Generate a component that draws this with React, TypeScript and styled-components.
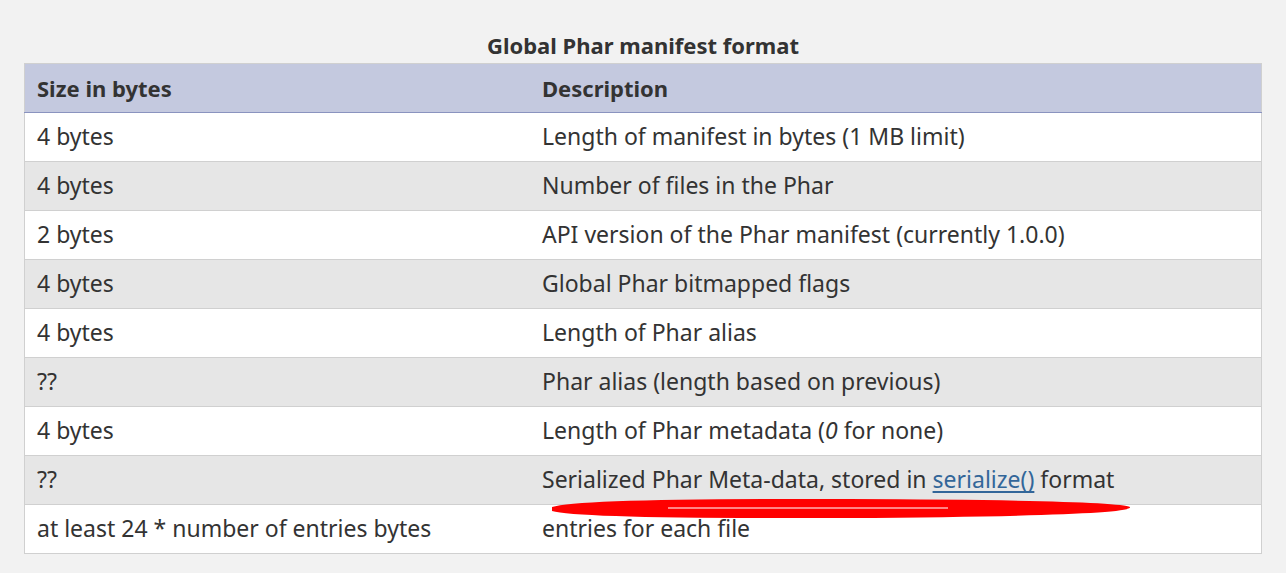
import React from "react";
import styled, { createGlobalStyle } from "styled-components";

const Global = createGlobalStyle`
  html, body { margin: 0; background: #f2f2f2; }
  body { font-family: "Noto Sans", "Open Sans", sans-serif; color: #333; }
`;

const Page = styled.div`
  padding: 28px 24px 0 24px;
  position: relative;
`;

const Table = styled.table`
  width: 1238px;
  border-collapse: collapse;
  border: 1px solid #d0d0d0;
  font-size: 23px;
  line-height: 1.2;
`;

const Caption = styled.caption`
  font-weight: 700;
  font-size: 22px;
  height: 35px;
  line-height: 35px;
  color: #333;
`;

const Th = styled.th<{ $w?: string }>`
  background: #c4c9df;
  text-align: left;
  font-weight: 700;
  font-size: 22px;
  height: 48px;
  padding: 0 12px;
  border-bottom: 1px solid #8a93bf;
  width: ${(p) => p.$w || "auto"};
`;

const Tr = styled.tr<{ $alt: boolean }>`
  background: ${(p) => (p.$alt ? "#e6e6e6" : "#ffffff")};
  border-top: 1px solid #d0d0d0;
`;

const Td = styled.td`
  height: 48px;
  padding: 0 12px;
  vertical-align: middle;
`;

const Link = styled.a`
  color: #336699;
  text-decoration: underline;
  text-underline-offset: 3px;
`;

const Scribble = styled.svg`
  position: absolute;
  left: 548px;
  top: 494px;
  pointer-events: none;
`;

const rows: [string, React.ReactNode][] = [
  ["4 bytes", "Length of manifest in bytes (1 MB limit)"],
  ["4 bytes", "Number of files in the Phar"],
  ["2 bytes", "API version of the Phar manifest (currently 1.0.0)"],
  ["4 bytes", "Global Phar bitmapped flags"],
  ["4 bytes", "Length of Phar alias"],
  ["??", "Phar alias (length based on previous)"],
  ["4 bytes", <>Length of Phar metadata (<em>0</em> for none)</>],
  ["??", <>Serialized Phar Meta-data, stored in <Link href="#">serialize()</Link> format</>],
  ["at least 24 * number of entries bytes", "entries for each file"],
];

export default function App() {
  return (
    <>
      <Global />
      <Page>
        <Table>
          <Caption>Global Phar manifest format</Caption>
          <thead>
            <tr>
              <Th $w="481px">Size in bytes</Th>
              <Th>Description</Th>
            </tr>
          </thead>
          <tbody>
            {rows.map(([a, b], i) => (
              <Tr key={i} $alt={i % 2 === 1}>
                <Td>{a}</Td>
                <Td>{b}</Td>
              </Tr>
            ))}
          </tbody>
        </Table>
        <Scribble width="590" height="28" viewBox="0 0 590 28">
          <path d="M4 13 Q30 4 300 5 Q570 6 582 13 Q588 22 300 24 Q30 25 4 17 Z" fill="#ff0000" />
          <path d="M120 14 L400 14" stroke="#ffb0b0" strokeWidth="1.5" />
        </Scribble>
      </Page>
    </>
  );
}
